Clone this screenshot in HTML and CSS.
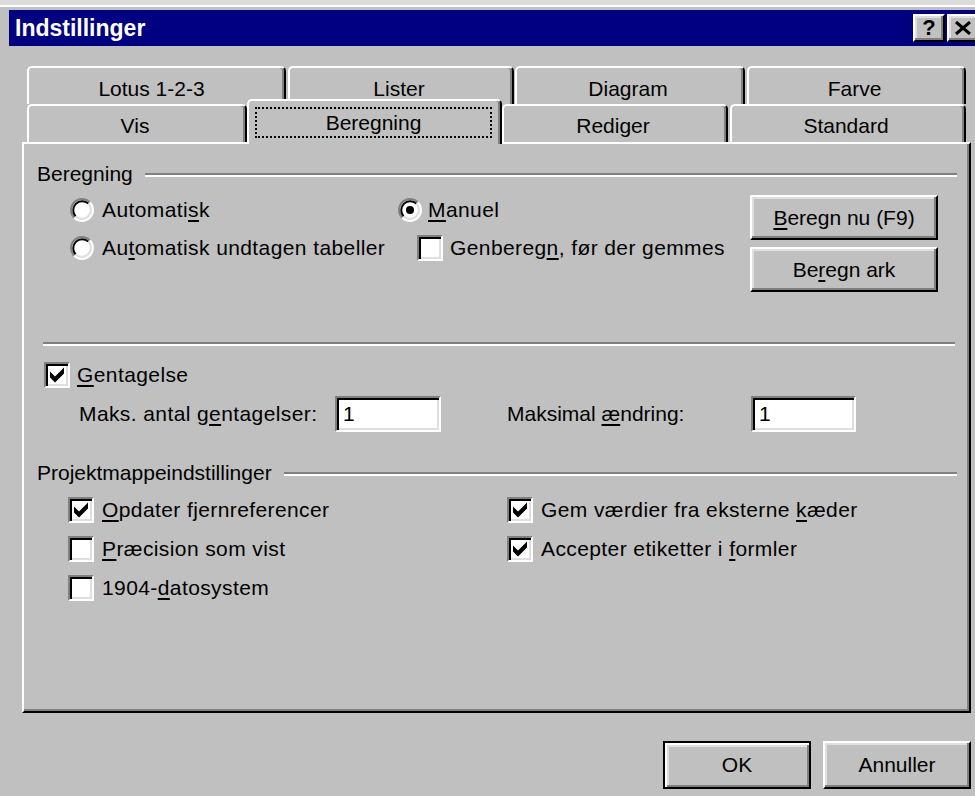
FILE: index.html
```html
<!DOCTYPE html>
<html lang="da">
<head>
<meta charset="utf-8">
<title>Indstillinger</title>
<link rel="stylesheet" href="styles.css">
</head>
<body>
<div class="window">
  <div class="frame">
    <header class="titlebar">
      <span class="title">Indstillinger</span>
      <div class="caption-buttons">
        <span class="cap-btn">?</span>
        <span class="cap-btn">
          <svg width="16" height="14" viewBox="0 0 16 14"><path d="M1 1 L15 13 M15 1 L1 13" stroke="#000" stroke-width="3"/></svg>
        </span>
      </div>
    </header>

    <div class="client">
      <div class="tabs">
        <div class="tab-row back">
          <div class="tab t-lotus">Lotus 1-2-3</div>
          <div class="tab t-lister">Lister</div>
          <div class="tab t-diagram">Diagram</div>
          <div class="tab t-farve">Farve</div>
        </div>
        <div class="tab-row front">
          <div class="tab t-vis">Vis</div>
          <div class="tab selected t-beregning"><span class="focus">Beregning</span></div>
          <div class="tab t-rediger">Rediger</div>
          <div class="tab t-standard">Standard</div>
        </div>
      </div>

      <section class="panel">
        <div class="group-head">
          <span>Beregning</span>
          <span class="rule"></span>
        </div>

        <div class="calc-body">
          <div class="col col-left">
            <label class="option">
              <svg class="radio" width="24" height="24" viewBox="0 0 24 24"><circle cx="12" cy="12" r="10" fill="#fff"/><path d="M4.22 19.78 A11 11 0 0 1 19.78 4.22" fill="none" stroke="#808080" stroke-width="2"/><path d="M19.78 4.22 A11 11 0 0 1 4.22 19.78" fill="none" stroke="#fff" stroke-width="2"/><path d="M5.64 18.36 A9 9 0 0 1 18.36 5.64" fill="none" stroke="#000" stroke-width="2"/><path d="M18.36 5.64 A9 9 0 0 1 5.64 18.36" fill="none" stroke="#dfdfdf" stroke-width="2"/></svg>
              <span>Automati<u>s</u>k</span>
            </label>
            <label class="option">
              <svg class="radio" width="24" height="24" viewBox="0 0 24 24"><circle cx="12" cy="12" r="10" fill="#fff"/><path d="M4.22 19.78 A11 11 0 0 1 19.78 4.22" fill="none" stroke="#808080" stroke-width="2"/><path d="M19.78 4.22 A11 11 0 0 1 4.22 19.78" fill="none" stroke="#fff" stroke-width="2"/><path d="M5.64 18.36 A9 9 0 0 1 18.36 5.64" fill="none" stroke="#000" stroke-width="2"/><path d="M18.36 5.64 A9 9 0 0 1 5.64 18.36" fill="none" stroke="#dfdfdf" stroke-width="2"/></svg>
              <span>Au<u>t</u>omatisk undtagen tabeller</span>
            </label>
          </div>

          <div class="col col-mid">
            <label class="option tight">
              <svg class="radio" width="24" height="24" viewBox="0 0 24 24"><circle cx="12" cy="12" r="10" fill="#fff"/><path d="M4.22 19.78 A11 11 0 0 1 19.78 4.22" fill="none" stroke="#808080" stroke-width="2"/><path d="M19.78 4.22 A11 11 0 0 1 4.22 19.78" fill="none" stroke="#fff" stroke-width="2"/><path d="M5.64 18.36 A9 9 0 0 1 18.36 5.64" fill="none" stroke="#000" stroke-width="2"/><path d="M18.36 5.64 A9 9 0 0 1 5.64 18.36" fill="none" stroke="#dfdfdf" stroke-width="2"/><circle cx="12" cy="12" r="4" fill="#000"/></svg>
              <span><u>M</u>anuel</span>
            </label>
            <label class="option indent">
              <span class="check"></span>
              <span>Genbereg<u>n</u>, før der gemmes</span>
            </label>
          </div>

          <div class="col col-btns">
            <button class="btn wide"><u>B</u>eregn nu (F9)</button>
            <button class="btn wide">Be<u>r</u>egn ark</button>
          </div>
        </div>

        <div class="separator"></div>

        <label class="option iter">
          <span class="check on"><svg width="18" height="18" viewBox="0 0 18 18"><polygon points="2,5.5 7,10.5 16,1.5 16,7.5 7,16.5 2,11.5" fill="#000"/></svg></span>
          <span><u>G</u>entagelse</span>
        </label>

        <div class="iter-fields">
          <span class="field-label first">Maks. antal g<u>e</u>ntagelser:</span>
          <span class="textbox short">1</span>
          <span class="field-label second">Maksimal <u>æ</u>ndring:</span>
          <span class="textbox">1</span>
        </div>

        <div class="group-head book">
          <span>Projektmappeindstillinger</span>
          <span class="rule"></span>
        </div>

        <div class="book-body">
          <div class="col book-left">
            <label class="option">
              <span class="check on"><svg width="18" height="18" viewBox="0 0 18 18"><polygon points="2,5.5 7,10.5 16,1.5 16,7.5 7,16.5 2,11.5" fill="#000"/></svg></span>
              <span><u>O</u>pdater fjernreferencer</span>
            </label>
            <label class="option">
              <span class="check"></span>
              <span><u>P</u>ræcision som vist</span>
            </label>
            <label class="option">
              <span class="check"></span>
              <span>1904-<u>d</u>atosystem</span>
            </label>
          </div>
          <div class="col book-right">
            <label class="option">
              <span class="check on"><svg width="18" height="18" viewBox="0 0 18 18"><polygon points="2,5.5 7,10.5 16,1.5 16,7.5 7,16.5 2,11.5" fill="#000"/></svg></span>
              <span>Gem værdier fra eksterne <u>k</u>æder</span>
            </label>
            <label class="option">
              <span class="check on"><svg width="18" height="18" viewBox="0 0 18 18"><polygon points="2,5.5 7,10.5 16,1.5 16,7.5 7,16.5 2,11.5" fill="#000"/></svg></span>
              <span>Accepter etiketter i <u>f</u>ormler</span>
            </label>
          </div>
        </div>
      </section>

      <div class="actions">
        <button class="btn dialog default">OK</button>
        <button class="btn dialog">Annuller</button>
      </div>
    </div>
  </div>
</div>
</body>
</html>
```

FILE: styles.css
```css
* {
  box-sizing: border-box;
}

html,
body {
  margin: 0;
  height: 100%;
}

body {
  background: #c0c0c0;
  overflow: hidden;
  font-family: "Liberation Sans", Arial, sans-serif;
  font-size: 21px;
  color: #000;
}

u {
  text-decoration-thickness: 2px;
  text-underline-offset: 3px;
}

/* ---------- window frame ---------- */

.window {
  width: 990px;
  border-top: 5px solid #dcdcdc;
}

.frame {
  border-top: 2px solid #fff;
  padding-top: 3px;
}

.titlebar {
  height: 36px;
  margin: 0 7px 0 9px;
  padding: 0 4px 0 6px;
  background: #000080;
  display: flex;
  align-items: center;
  justify-content: space-between;
}

.title {
  color: #fff;
  font-weight: bold;
  font-size: 23px;
  line-height: 1;
  padding-top: 1px;
}

.caption-buttons {
  display: flex;
  gap: 2px;
}

.cap-btn {
  width: 32px;
  height: 28px;
  background: #c0c0c0;
  border: 2px solid;
  border-color: #fff #000 #000 #fff;
  box-shadow: inset -2px -2px #808080, inset 2px 2px #dfdfdf;
  display: flex;
  align-items: center;
  justify-content: center;
  font-weight: bold;
  font-size: 22px;
  line-height: 1;
}

/* ---------- client area ---------- */

.client {
  padding: 20px 19px 0 22px;
}

.tab-row {
  display: flex;
  height: 38px;
  margin-left: 5px;
}

.tab {
  height: 38px;
  background: #c0c0c0;
  border: 2px solid #fff;
  border-bottom: 0;
  border-right-color: #000;
  border-radius: 5px 5px 0 0;
  box-shadow: inset -2px 0 #808080;
  display: flex;
  align-items: center;
  justify-content: center;
  padding: 3px 4px 0 0;
  white-space: nowrap;
}

.back .tab {
  padding-top: 5px;
}

.t-lotus   { width: 259px; margin-right: 2px; padding-right: 10px; }
.t-lister  { width: 226px; margin-right: 1px; }
.t-diagram { width: 230px; margin-right: 2px; }
.t-farve   { width: 219px; }

.t-vis       { width: 220px; }
.t-beregning { width: 255px; }
.t-rediger   { width: 226px; margin-right: 2px; }
.t-standard  { width: 236px; }

.tab.selected {
  height: 45px;
  margin-top: -5px;
  margin-bottom: -2px;
  padding: 0;
  align-self: flex-start;
  position: relative;
  z-index: 1;
  display: block;
}

.focus {
  display: flex;
  align-items: center;
  justify-content: center;
  height: 31px;
  margin: 6px 8px 6px 6px;
  border: 2px dotted #000;
  padding-top: 1px;
}

/* ---------- tab page ---------- */

.panel {
  height: 571px;
  border: 2px solid;
  border-color: #fff #000 #000 #fff;
  box-shadow: inset -2px -2px #808080;
  padding: 18px 12px 0 13px;
}

.group-head {
  display: flex;
  align-items: center;
  height: 24px;
}

.group-head .rule {
  flex: 1;
  margin-left: 12px;
  margin-top: 2px;
  border-top: 2px solid #808080;
  border-bottom: 2px solid #fff;
}

.option {
  display: flex;
  align-items: center;
  gap: 8px;
  height: 26px;
  white-space: nowrap;
  letter-spacing: 0.4px;
}

.option.tight {
  gap: 6px;
}

.option.indent {
  margin-left: 19px;
  gap: 7px;
}

.radio {
  flex: none;
}

.check {
  flex: none;
  width: 26px;
  height: 26px;
  background: #fff;
  border: 2px solid;
  border-color: #808080 #fff #fff #808080;
  box-shadow: inset 2px 2px #000, inset -2px -2px #dfdfdf;
  padding: 2px;
  display: flex;
}

.col {
  display: flex;
  flex-direction: column;
}

.calc-body {
  display: flex;
  margin-top: 9px;
  padding-left: 33px;
}

.col-left,
.col-mid {
  padding-top: 2px;
  gap: 12px;
}

.col-left {
  width: 328px;
}

.col-mid {
  width: 352px;
}

.col-btns {
  gap: 7px;
}

.btn {
  font-family: inherit;
  font-size: 21px;
  color: #000;
  background: #c0c0c0;
  border: 2px solid;
  border-color: #fff #000 #000 #fff;
  box-shadow: inset -2px -2px #808080, inset 2px 2px #dfdfdf;
  padding: 0;
  display: flex;
  align-items: center;
  justify-content: center;
}

.btn.wide {
  width: 188px;
  height: 45px;
}

.separator {
  margin: 50px 2px 0 6px;
  border-top: 2px solid #808080;
  border-bottom: 2px solid #fff;
}

.option.iter {
  margin: 16px 0 0 7px;
  gap: 7px;
}

.iter-fields {
  display: flex;
  align-items: center;
  margin-top: 8px;
  padding-left: 42px;
  height: 36px;
}

.field-label {
  white-space: nowrap;
}

.field-label.first {
  width: 256px;
  letter-spacing: 0.4px;
}

.field-label.second {
  width: 244px;
  margin-left: 66px;
}

.textbox {
  width: 105px;
  height: 36px;
  background: #fff;
  border: 2px solid;
  border-color: #808080 #fff #fff #808080;
  box-shadow: inset 2px 2px #000, inset -2px -2px #dfdfdf;
  padding: 0 0 0 6px;
  display: flex;
  align-items: center;
}

.textbox.short {
  width: 106px;
}

.group-head.book {
  margin-top: 29px;
}

.book-body {
  display: flex;
  margin-top: 12px;
  padding-left: 31px;
}

.book-body .col {
  gap: 13px;
}

.book-left {
  width: 439px;
}

/* ---------- dialog buttons ---------- */

.actions {
  display: flex;
  justify-content: flex-end;
  gap: 12px;
  margin-top: 28px;
}

.btn.dialog {
  width: 148px;
  height: 48px;
}

.btn.default {
  outline: 2px solid #000;
  outline-offset: -2px;
  border-color: #000;
  box-shadow: inset 2px 2px #fff, inset -2px -2px #808080, inset 4px 4px #dfdfdf;
}
```
